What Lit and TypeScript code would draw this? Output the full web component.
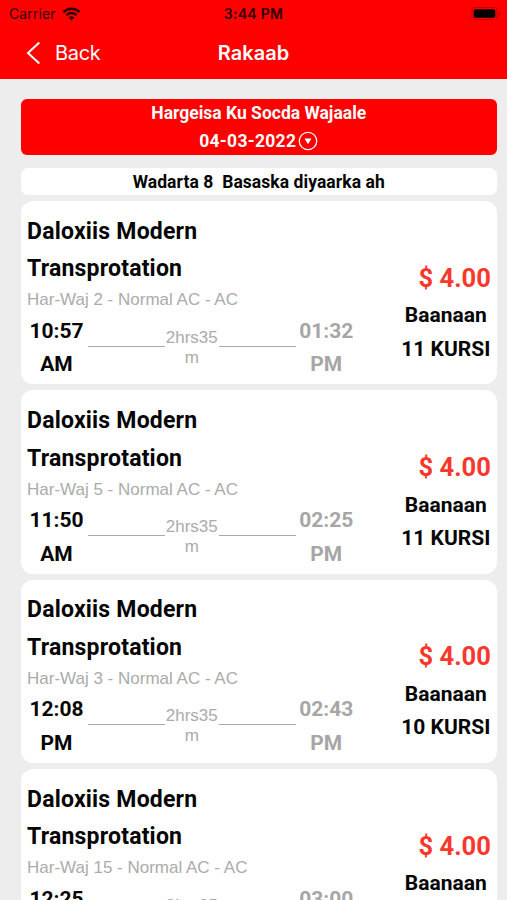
import { LitElement, html, css } from "lit";
import { customElement, property } from "lit/decorators.js";

interface Trip {
  route: string;
  depart: [string, string];
  arrive: [string, string];
  seats: number;
}

const trips: Trip[] = [
  { route: "Har-Waj 2 - Normal AC - AC", depart: ["10:57", "AM"], arrive: ["01:32", "PM"], seats: 11 },
  { route: "Har-Waj 5 - Normal AC - AC", depart: ["11:50", "AM"], arrive: ["02:25", "PM"], seats: 11 },
  { route: "Har-Waj 3 - Normal AC - AC", depart: ["12:08", "PM"], arrive: ["02:43", "PM"], seats: 10 },
  { route: "Har-Waj 15 - Normal AC - AC", depart: ["12:25", "PM"], arrive: ["03:00", "PM"], seats: 11 },
];

@customElement("trip-card")
export class TripCard extends LitElement {
  @property({ attribute: false }) trip!: Trip;

  static styles = css`
    :host {
      display: flex;
      justify-content: space-between;
      box-sizing: border-box;
      height: 183.4px;
      padding: 11.8px 6.2px 0 6.5px;
      border-radius: 12px;
      background: #fff;
      color: #050505;
      font: 700 21px/33.5px Roboto, sans-serif;
      white-space: nowrap;
    }
    .name { font-size: 23px; line-height: 37.5px; letter-spacing: 0.2px; }
    .route {
      font: 17px/22px "Liberation Sans", sans-serif;
      color: #ababab;
      padding-top: 1.6px;
    }
    .times { display: flex; padding-top: 3.4px; }
    .time { width: 59px; text-align: center; }
    .arrive { color: #a6a6a6; margin-left: 1.2px; }
    .line { width: 76.5px; height: 1px; margin-top: 31px; background: #a9a9a9; flex: none; }
    .first { margin-left: 2px; }
    .length {
      width: 54.5px;
      padding-top: 13px;
      text-align: center;
      font: 17px/20px "Liberation Sans", sans-serif;
      color: #ababab;
    }
    .fare { width: 90px; padding-top: 47px; text-align: center; }
    .price {
      font-size: 25.5px;
      line-height: 37px;
      padding-bottom: 2.5px;
      color: #f9382d;
      text-align: right;
    }
  `;

  render() {
    const t = this.trip;
    return html`
      <div>
        <div class="name">Daloxiis Modern<br />Transprotation</div>
        <div class="route">${t.route}</div>
        <div class="times">
          <div class="time">${t.depart[0]}<br />${t.depart[1]}</div>
          <div class="line first"></div>
          <div class="length">2hrs35<br />m</div>
          <div class="line"></div>
          <div class="time arrive">${t.arrive[0]}<br />${t.arrive[1]}</div>
        </div>
      </div>
      <div class="fare">
        <div class="price">$ 4.00</div>
        <div>Baanaan</div>
        <div>${t.seats} KURSI</div>
      </div>
    `;
  }
}

@customElement("app-root")
export class AppRoot extends LitElement {
  static styles = css`
    :host {
      display: block;
      height: 900px;
      overflow: hidden;
      background: #ededed;
      font-family: Roboto, sans-serif;
      white-space: nowrap;
    }
    .top { height: 79px; background: #f00; }
    .row { display: grid; grid-template-columns: 1fr auto 1fr; align-items: center; }
    .status {
      height: 27px;
      color: #300000;
      font: 500 14px/27px Inter, sans-serif;
    }
    .carrier { display: flex; align-items: center; gap: 6px; padding-left: 9px; font-weight: 400; letter-spacing: 0.1px; }
    .clock { font-weight: 600; letter-spacing: 0.3px; }
    .battery { justify-self: end; margin-right: 5px; display: block; }
    .nav { height: 52px; color: #fff; font: 20px/52px Inter, sans-serif; }
    .back { display: flex; align-items: center; gap: 14px; padding-left: 26px; letter-spacing: -0.3px; }
    .title { font-weight: 600; }
    .body { padding: 19.5px 10px 0 20.5px; }
    .banner {
      height: 56px;
      border-radius: 6px;
      background: #f00;
      color: #fff;
      font-weight: 700;
      font-size: 17.5px;
      line-height: 28px;
      text-align: center;
    }
    .date { display: flex; justify-content: center; align-items: center; gap: 2px; letter-spacing: 0.3px; }
    .count {
      margin-top: 13px;
      height: 27.5px;
      border-radius: 7px;
      background: #fff;
      color: #050505;
      font-weight: 700;
      font-size: 17.5px;
      line-height: 28px;
      letter-spacing: 0.06px;
      text-align: center;
      white-space: pre;
    }
    .list { display: flex; flex-direction: column; gap: 6px; margin-top: 5.9px; }
  `;

  render() {
    return html`
      <div class="top">
        <div class="row status">
          <div class="carrier">
            <span>Carrier</span>
            <svg width="19" height="14" viewBox="0 0 18 14" fill="none" stroke="#300000" stroke-width="2.4">
              <path d="M1 5.1a11.4 11.4 0 0 1 16 0M3.9 8.1a7.3 7.3 0 0 1 10.2 0" />
              <path d="M6.2 10.5a4 4 0 0 1 5.6 0L9 13.4z" fill="#300000" stroke="none" />
            </svg>
          </div>
          <div class="clock">3:44 PM</div>
          <svg class="battery" width="31" height="15" viewBox="0 0 31 15">
            <rect x="1" y="1.5" width="25" height="12" rx="3.5" fill="none" stroke="#c80000" stroke-width="1.2" />
            <rect x="2.7" y="3.2" width="21.6" height="8.6" rx="1.8" fill="#000" />
            <path d="M27.8 5.3q2 2.2 0 4.4z" fill="#a00000" />
          </svg>
        </div>
        <div class="row nav">
          <div class="back">
            <svg width="15" height="24" viewBox="0 0 15 24" fill="none" stroke="#fff" stroke-width="2">
              <path d="M13.3 1.5 2 12l11.3 10.5" />
            </svg>
            <span>Back</span>
          </div>
          <div class="title">Rakaab</div>
        </div>
      </div>
      <div class="body">
        <div class="banner">
          <div>Hargeisa Ku Socda Wajaale</div>
          <div class="date">
            <span>04-03-2022</span>
            <svg width="20" height="20" viewBox="0 0 20 20">
              <circle cx="10" cy="10" r="8.7" fill="none" stroke="#fff" stroke-width="1.3" />
              <path d="M6.5 7.4h7L10 13.2z" fill="#fff" />
            </svg>
          </div>
        </div>
        <div class="count">Wadarta 8  Basaska diyaarka ah</div>
        <div class="list">${trips.map((t) => html`<trip-card .trip=${t}></trip-card>`)}</div>
      </div>
    `;
  }
}
